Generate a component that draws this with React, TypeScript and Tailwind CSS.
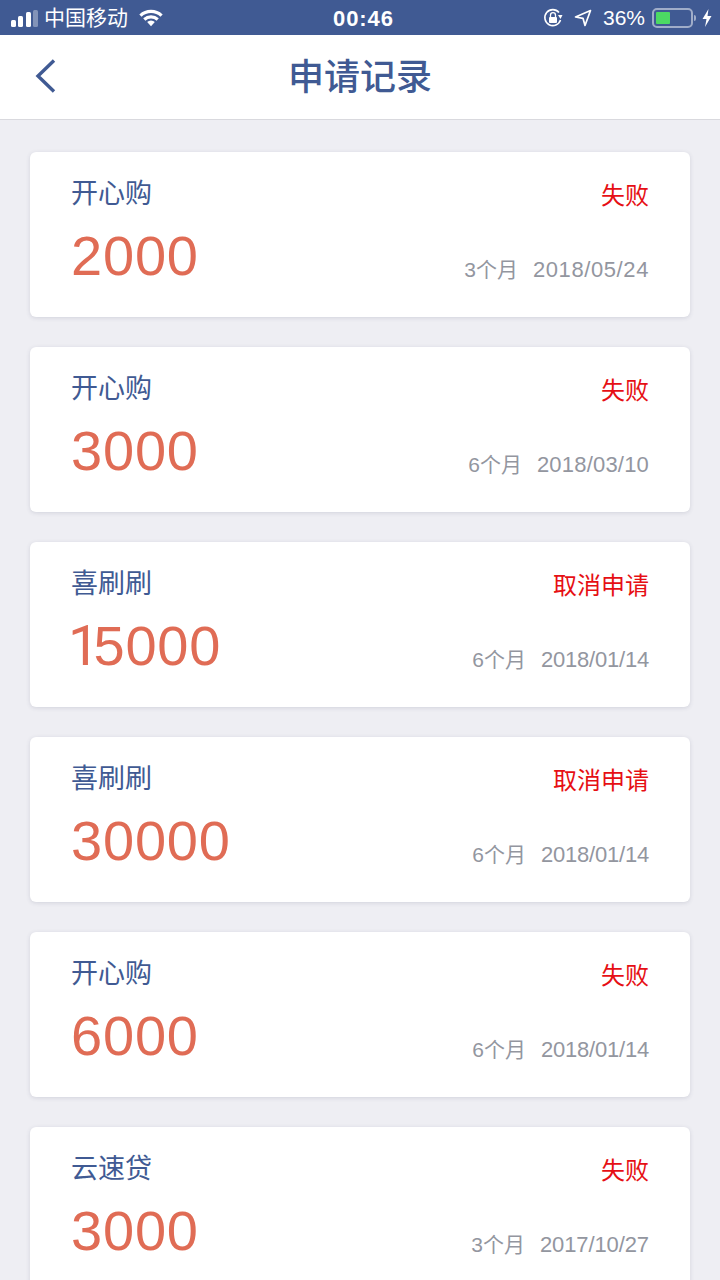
const CJK = "font-['Liberation_Sans','Noto_Sans_CJK_SC',sans-serif]"

// dateTrack: the reference font has a narrow "1", so each date gets its own tracking
const records = [
  { name: '开心购', amount: '2000', status: '失败', term: '3个月', date: '2018/05/24', dateTrack: 'tracking-[0.6px]' },
  { name: '开心购', amount: '3000', status: '失败', term: '6个月', date: '2018/03/10', dateTrack: 'tracking-[0.2px]' },
  { name: '喜刷刷', amount: '15000', status: '取消申请', term: '6个月', date: '2018/01/14', dateTrack: 'tracking-[-0.2px]' },
  { name: '喜刷刷', amount: '30000', status: '取消申请', term: '6个月', date: '2018/01/14', dateTrack: 'tracking-[-0.2px]' },
  { name: '开心购', amount: '6000', status: '失败', term: '6个月', date: '2018/01/14', dateTrack: 'tracking-[-0.2px]' },
  { name: '云速贷', amount: '3000', status: '失败', term: '3个月', date: '2017/10/27', dateTrack: 'tracking-[-0.1px]' },
]

// ── Status bar ───────────────────────────
function StatusBar() {
  return (
    <div className="h-[35px] shrink-0 bg-[#405a93] text-white flex items-center justify-between pl-[10px] pr-[8px] relative">
      <div className="flex items-center">
        <svg className="mt-[1px]" width="29" height="17" viewBox="0 0 29 17" fill="white">
          <rect x="1" y="10" width="5" height="7" rx="1.5" />
          <rect x="8" y="6" width="5" height="11" rx="1.5" />
          <rect x="16" y="2" width="5" height="15" rx="1.5" />
          <rect x="23" y="0" width="5" height="17" rx="1.5" opacity="0.35" />
        </svg>
        <span className="ml-[5px] text-[21px] leading-none">中国移动</span>
        <svg className="ml-[11px]" width="24" height="18" viewBox="0 0 25 18" fill="none" stroke="white" strokeWidth="3.4">
          <path d="M1.5 6.5 A16 16 0 0 1 23.5 6.5" />
          <path d="M5.5 10.5 A10.5 10.5 0 0 1 19.5 10.5" />
          <path d="M12.5 17.5 L8.5 13.2 A5.5 5.5 0 0 1 16.5 13.2 Z" fill="white" stroke="none" />
        </svg>
      </div>
      <span className="absolute left-[333px] top-[6px] text-[22px] leading-[25px] font-semibold tracking-[0.9px]">00:46</span>
      <div className="flex items-center">
        <svg width="20" height="20" viewBox="0 0 20 20" fill="none" stroke="white" strokeWidth="1.6">
          <path d="M17.5 12 A8 8 0 1 1 16 4.5" />
          <path d="M15 7 L19.5 7 L17.5 11 Z" fill="white" stroke="none" />
          <rect x="6" y="9" width="8" height="6" rx="1" fill="white" stroke="none" />
          <path d="M7.5 9 V7.2 A2.5 2.5 0 0 1 12.5 7.2 V9" strokeWidth="1.3" />
        </svg>
        <svg className="ml-[11px]" width="18" height="18" viewBox="0 0 18 18" fill="none" stroke="white" strokeWidth="1.7">
          <path d="M16.5 1.5 L1.5 8 L9 9.3 L11 16.5 Z" strokeLinejoin="round" />
        </svg>
        <span className="ml-[11px] text-[21px] leading-none">36%</span>
        <div className="ml-[7px] w-[41px] h-[20px] border-2 border-white/50 rounded-[5px] p-[2px]">
          <div className="w-[14px] h-full bg-[#4cd964] rounded-[1px]" />
        </div>
        <div className="ml-[1px] w-[2px] h-[6px] bg-white/50 rounded-r-sm" />
        <svg className="ml-[6px]" width="10" height="18" viewBox="0 0 10 18" fill="white">
          <path d="M6.5 0 L0.5 10 H4.5 L3 18 L9.5 7 H5.5 Z" />
        </svg>
      </div>
    </div>
  )
}

// ── Header ───────────────────────────
function Header() {
  return (
    <div className="h-[85px] shrink-0 bg-white border-b border-[#d9d9de] flex items-center justify-center relative">
      <svg className="absolute left-[35px] top-[24px]" width="22" height="34" viewBox="0 0 22 34" fill="none" stroke="#405a93" strokeWidth="3.4">
        <path d="M19 1.5 L3 17 L19 32.5" />
      </svg>
      <h1 className="text-[36px] leading-none font-medium text-[#405a93] mt-[2px]">申请记录</h1>
    </div>
  )
}

// ── Record card ───────────────────────────
function RecordCard({ record }: { record: (typeof records)[number] }) {
  const first = record.amount[0]
  return (
    <div className="h-[165px] shrink-0 bg-white rounded-[6px] shadow-[0_1px_4px_rgba(64,70,100,0.16)] pl-[41px] pr-[41px] flex justify-between">
      <div className="flex flex-col">
        <span className="mt-[26px] text-[27px] leading-[32px] text-[#405a93]">{record.name}</span>
        <span className="mt-[14px] text-[56px] leading-[64px] tracking-[0.8px] text-[#e06c55]">
          {/* Liberation's 1 has a foot, the reference's has none */}
          {first === '1' ? <span className="font-['Roboto'] font-normal -ml-[3px] tracking-[-6px]">1</span> : first}
          {record.amount.slice(1)}
        </span>
      </div>
      <div className="flex flex-col items-end">
        <span className="mt-[29px] text-[24px] leading-[30px] text-[#e60f14]">{record.status}</span>
        <span className="mt-[45px] text-[21px] leading-[28px] text-[#93969f] whitespace-nowrap">
          {record.term}
          <span className={`ml-[15px] text-[22px] ${record.dateTrack}`}>{record.date}</span>
        </span>
      </div>
    </div>
  )
}

export default function App() {
  return (
    <div className={`w-[720px] h-[1280px] overflow-hidden bg-[#eeeef3] flex flex-col ${CJK}`}>
      <StatusBar />
      <Header />
      <div className="flex flex-col gap-[30px] px-[30px] pt-[32px]">
        {records.map((r, i) => (
          <RecordCard key={i} record={r} />
        ))}
      </div>
    </div>
  )
}
